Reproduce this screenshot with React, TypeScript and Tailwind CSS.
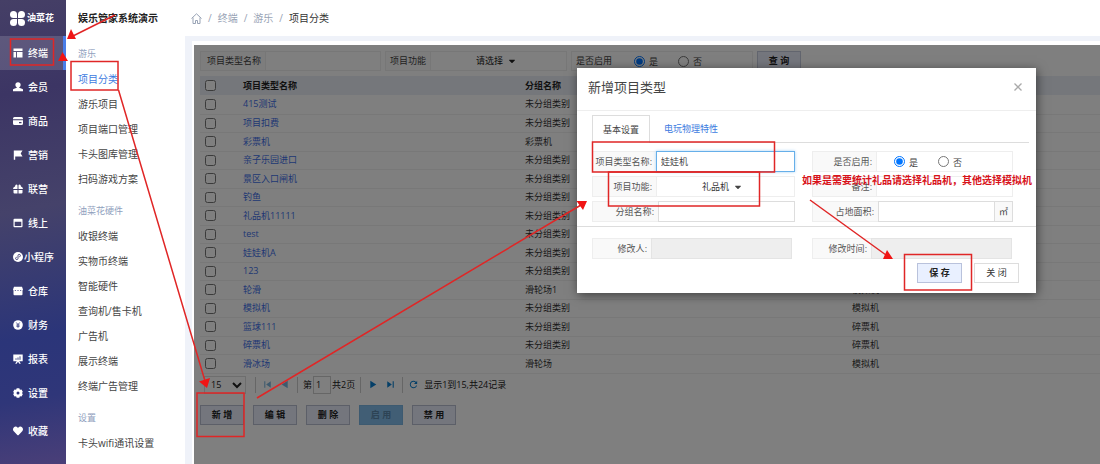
import type { ReactNode } from 'react';
import { clsx } from 'clsx';
import { FaCaretDown, FaHeart } from 'react-icons/fa';
import {
  MdSkipNext,
  MdSkipPrevious,
  MdPlayArrow,
  MdRefresh,
} from 'react-icons/md';

const Glyph = ({ children }: { children: ReactNode }) => (
  <svg viewBox="0 0 10 10" className="h-[10px] w-[10px]" fill="currentColor" aria-hidden="true">
    {children}
  </svg>
);

const LogoIcon = () => (
  <svg viewBox="0 0 15 15" className="h-[15px] w-[15px] shrink-0" fill="#fff" aria-hidden="true">
    <path d="M3.500 0A3.500 3.500 0 0 1 7 3.500V7H3.500a3.500 3.500 0 0 1 0-7z" />
    <path d="M11.500 0a3.500 3.500 0 0 1 0 7H8V3.500A3.500 3.500 0 0 1 11.500 0z" />
    <path d="M3.500 8H7v3.500A3.500 3.500 0 1 1 3.500 8z" />
    <path d="M8 8h3.500A3.500 3.500 0 1 1 8 11.500z" />
  </svg>
);

const navItems = [
  {
    label: '终端',
    active: true,
    icon: (
      <Glyph>
        <path d="M.5.5h9v2.500h-9zM.5 4h2.500v5.500H.5zM4 4h5.500v5.500H4z" />
      </Glyph>
    ),
  },
  {
    label: '会员',
    icon: (
      <Glyph>
        <circle cx="5" cy="2.800" r="2.600" />
        <path d="M3.800 4.500h2.400v1.300l3.300 1.200q.5.200.5.800V9.300H0V7.800q0-.6.500-.8l3.300-1.200z" />
      </Glyph>
    ),
  },
  {
    label: '商品',
    icon: (
      <Glyph>
        <path d="M1.500 1h7A1.500 1.500 0 0 1 10 2.500v.7H0v-.7A1.500 1.500 0 0 1 1.500 1zM0 4.300h10v3.200A1.500 1.500 0 0 1 8.500 9h-7A1.500 1.500 0 0 1 0 7.500zM6 6v1.200h2.500V6z" fillRule="evenodd" />
      </Glyph>
    ),
  },
  {
    label: '营销',
    icon: (
      <Glyph>
        <path d="M.8.5h8.700L7.700 3.500l1.800 3H2.200v3.200H.8z" />
      </Glyph>
    ),
  },
  {
    label: '联营',
    icon: (
      <Glyph>
        <path d="M4.500 1.500V5H0q0-2 2-2.500Q2.200.5 3.500.5q.8 0 1 1zM5.500 1.500V5H10q0-2-2-2.500Q7.800.5 6.500.5q-.8 0-1 1zM.5 6h4v3.500h-3a1 1 0 0 1-1-1zM5.500 6h4v2.500a1 1 0 0 1-1 1h-3z" />
      </Glyph>
    ),
  },
  {
    label: '线上',
    icon: (
      <Glyph>
        <path d="M1.500.8h7a1 1 0 0 1 1 1v6.400a1 1 0 0 1-1 1h-7a1 1 0 0 1-1-1V1.800a1 1 0 0 1 1-1zM1.700 3.800V8h6.600V3.800z" fillRule="evenodd" />
      </Glyph>
    ),
  },
  {
    label: '小程序',
    icon: (
      <Glyph>
        <circle cx="5" cy="5" r="5" />
        <path d="M3.700 5.200a1.200 1.200 0 1 0 1.300 1.300V3.500a1.200 1.200 0 1 1 1.300 1.300" fill="none" stroke="#3a3870" strokeWidth=".9" />
      </Glyph>
    ),
  },
  {
    label: '仓库',
    icon: (
      <Glyph>
        <path d="M1 .8h8l1 2.700-.5 1V8.300a1 1 0 0 1-1 1h-7a1 1 0 0 1-1-1V4.500L0 3.500z" />
        <path d="M2.300 4v1M5 4v1M7.700 4v1" stroke="#34387a" strokeWidth=".9" />
      </Glyph>
    ),
  },
  {
    label: '财务',
    icon: (
      <Glyph>
        <circle cx="5" cy="5" r="4.800" />
        <path d="M3.300 2.500 5 4.600l1.700-2.100M5 4.600V7.800M3.400 5h3.200M3.400 6.300h3.200" stroke="#2d3578" strokeWidth=".8" fill="none" />
      </Glyph>
    ),
  },
  {
    label: '报表',
    icon: (
      <Glyph>
        <path d="M.3.5h9.400v6.800H6.300L7.800 9.700H6.400L5 7.700 3.600 9.700H2.200l1.500-2.400H.3z" />
        <path d="M3 5.800V4.300M5 5.800V3.500M7 5.800V2.300" stroke="#2b3578" strokeWidth=".9" />
      </Glyph>
    ),
  },
  {
    label: '设置',
    icon: (
      <Glyph>
        <path d="M3.700.3h2.600l.6 1.400 1.600-.1 1.300 2.200L9 5l.8 1.200-1.300 2.200-1.600-.1-.6 1.400H3.700l-.6-1.400-1.600.1L.2 6.200 1 5 .2 3.800l1.300-2.200 1.600.1zM5 3.500a1.500 1.500 0 1 0 0 3 1.500 1.500 0 0 0 0-3z" fillRule="evenodd" />
      </Glyph>
    ),
  },
  { label: '收藏', icon: <FaHeart size={10} /> },
];

const menuGroups = [
  { title: '游乐', items: ['项目分类', '游乐项目', '项目端口管理', '卡头图库管理', '扫码游戏方案'] },
  {
    title: '油菜花硬件',
    items: ['收银终端', '实物币终端', '智能硬件', '查询机/售卡机', '广告机', '展示终端', '终端广告管理'],
  },
  { title: '设置', items: ['卡头wifi通讯设置'] },
];

const rows = [
  ['415测试', '未分组类别', '模拟机'],
  ['项目扣费', '未分组类别', '模拟机'],
  ['彩票机', '彩票机', '彩票机'],
  ['亲子乐园进口', '未分组类别', '闸机'],
  ['景区入口闸机', '未分组类别', '闸机'],
  ['钓鱼', '未分组类别', '模拟机'],
  ['礼品机11111', '未分组类别', '礼品机'],
  ['test', '未分组类别', '模拟机'],
  ['娃娃机A', '未分组类别', '礼品机'],
  ['123', '未分组类别', '模拟机'],
  ['轮滑', '滑轮场1', '模拟机'],
  ['模拟机', '未分组类别', '模拟机'],
  ['篮球111', '未分组类别', '碎票机'],
  ['碎票机', '未分组类别', '碎票机'],
  ['滑冰场', '滑轮场', '模拟机'],
];

const Sidebar = () => (
  <nav className="w-[66px] shrink-0 bg-[linear-gradient(170deg,#453f66_0%,#3c3564_20%,#45426a_45%,#2b3579_72%,#2f3679_85%,#4a3f78_100%)] text-white">
    <div className="flex h-9 items-center gap-0.5 pl-2.5 text-[9px] font-bold">
      <LogoIcon />
      油菜花
    </div>
    {navItems.map(({ label, icon, active }) => (
      <a
        key={label}
        href="#"
        className={clsx(
          'flex h-[34px] items-center pl-[13px] text-[10px] font-medium last:mt-1',
          active && 'border-r-[3px] border-[#4a7de8] bg-white/15'
        )}
      >
        <span className={clsx('shrink-0', label.length > 2 ? 'w-[11px]' : 'w-[15px]')}>{icon}</span>
        {label}
      </a>
    ))}
  </nav>
);

const SubMenu = () => (
  <aside className="w-[119px] shrink-0 bg-white pl-3">
    <h1 className="flex h-9 items-center text-[10px] font-bold text-[#222]">娱乐管家系统演示</h1>
    <div className="flex flex-col gap-2 pt-1.5">
      {menuGroups.map((group, i) => (
        <div key={group.title}>
          <h2 className="flex h-6 items-center text-[9px] text-[#8fa0bd]">{group.title}</h2>
          {group.items.map((item, j) => (
            <a
              key={item}
              href="#"
              className={clsx(
                'flex h-[25px] items-center text-[10px]',
                i === 0 && j === 0 ? 'text-[#3d7be0]' : 'text-[#444]'
              )}
            >
              {item}
            </a>
          ))}
        </div>
      ))}
    </div>
  </aside>
);

const Breadcrumb = () => (
  <header className="flex h-9 items-center gap-1.5 bg-white pl-1.5 text-[10px] text-[#98a3b5]">
    <svg viewBox="0 0 11 11" className="h-[11px] w-[11px]" fill="none" stroke="currentColor" aria-hidden="true">
      <path d="M.5 5.500 5.500.8l5 4.700M2 4.500v6h2.500v-3h2v3H9v-6" />
    </svg>
    <span>/</span>
    <a href="#">终端</a>
    <span>/</span>
    <a href="#">游乐</a>
    <span>/</span>
    <span className="text-[#333]">项目分类</span>
  </header>
);

const YesNo = ({ name }: { name: string }) => (
  <div className="flex items-center gap-5">
    <label className="flex items-center gap-1">
      <input type="radio" name={name} defaultChecked className="h-[11px] w-[11px]" />
      <span className="pt-0.5">是</span>
    </label>
    <label className="flex items-center gap-1">
      <input type="radio" name={name} className="h-[11px] w-[11px]" />
      <span className="pt-0.5">否</span>
    </label>
  </div>
);

const SearchForm = () => (
  <form className="flex h-5 gap-1 text-[#444]">
    <div className="flex w-[181px] border border-[#eee]">
      <label htmlFor="q-name" className="flex w-16 items-center bg-[#fafafa] pl-1.5">
        项目类型名称
      </label>
      <input id="q-name" className="min-w-0 flex-1 border-l border-[#eee] bg-white px-1" />
    </div>
    <div className="flex w-[182px] border border-[#eee]">
      <label htmlFor="q-func" className="flex w-11 items-center bg-[#fafafa] pl-1">
        项目功能
      </label>
      <div className="flex flex-1 items-center justify-center gap-px border-l border-[#eee] pr-1">
        <select id="q-func" className="w-[30px] appearance-none text-[#222]">
          <option>请选择</option>
        </select>
        <FaCaretDown className="text-[#222]" size={10} />
      </div>
    </div>
    <fieldset className="flex w-[182px] items-center border border-[#eee]">
      <span className="w-[62px] pl-1">是否启用</span>
      <YesNo name="q-enabled" />
    </fieldset>
    <button type="button" className="w-11 border border-[#c5cbdc] bg-[#e8ecfa] font-bold text-[#222]">
      查 询
    </button>
  </form>
);

const TypeTable = () => (
  <table className="mt-[5px] w-full table-fixed border-collapse text-left">
    <colgroup>
      <col className="w-[43px]" />
      <col className="w-[282px]" />
      <col className="w-[327px]" />
      <col />
    </colgroup>
    <thead>
      <tr className="h-[19px] bg-[#ebeef6] text-[#222]">
        <th className="pl-[5px]">
          <input type="checkbox" aria-label="全选" className="block h-[11px] w-[11px]" />
        </th>
        <th>项目类型名称</th>
        <th>分组名称</th>
        <th>项目功能</th>
      </tr>
    </thead>
    <tbody>
      {rows.map(([name, group, func]) => (
        <tr key={name} className="border-b border-[#f0f0f0] odd:h-[19px] even:h-[18px]">
          <td className="pl-[5px]">
            <input type="checkbox" aria-label={name} className="block h-[11px] w-[11px]" />
          </td>
          <td>
            <a href="#" className="text-[#3f6fe8]">
              {name}
            </a>
          </td>
          <td>{group}</td>
          <td>{func}</td>
        </tr>
      ))}
    </tbody>
  </table>
);

const Divider = () => <span className="h-4 w-px bg-[#ccc]" />;

const Pagination = () => (
  <div className="flex h-[22px] items-center gap-[5px] pl-1 text-[#222]">
    <select aria-label="每页条数" className="mr-1 h-[18px] w-[42px] border border-[#ddd] bg-white pl-0.5">
      <option>15</option>
    </select>
    <Divider />
    <button type="button" aria-label="首页" className="text-[#7db4dc]">
      <MdSkipPrevious size={13} />
    </button>
    <button type="button" aria-label="上一页" className="text-[#7db4dc]">
      <MdPlayArrow size={13} className="rotate-180" />
    </button>
    <Divider />
    <label className="flex items-center gap-px">
      第
      <input defaultValue="1" className="h-[18px] w-[18px] border border-[#ccc] bg-white pl-0.5" />
      共2页
    </label>
    <Divider />
    <button type="button" aria-label="下一页" className="text-[#0a7fd0]">
      <MdPlayArrow size={13} />
    </button>
    <button type="button" aria-label="末页" className="text-[#0a7fd0]">
      <MdSkipNext size={13} />
    </button>
    <Divider />
    <button type="button" aria-label="刷新" className="text-[#0a7fd0]">
      <MdRefresh size={11} />
    </button>
    <span>显示1到15,共24记录</span>
  </div>
);

const actions = ['新 增', '编 辑', '删 除', '启 用', '禁 用'];

const Actions = () => (
  <div className="mt-[9px] flex gap-[9px]">
    {actions.map((text) => (
      <button
        key={text}
        type="button"
        disabled={text === '启 用'}
        className="h-5 w-11 border border-[#b9bed0] bg-[#e8ecfa] font-bold text-[#222] disabled:border-[#7ab4e0] disabled:bg-[#82bdea] disabled:text-[#5a86aa]"
      >
        {text}
      </button>
    ))}
  </div>
);

type FieldProps = {
  label: string;
  htmlFor?: string;
  labelWidth?: string;
  children: ReactNode;
};

const Field = ({ label, htmlFor, labelWidth = 'w-16', children }: FieldProps) => (
  <div className="flex h-[21px]">
    <label
      htmlFor={htmlFor}
      className={clsx(
        'flex shrink-0 items-center justify-end border border-r-0 border-[#eee] bg-[#f9f9f9] pr-1 text-[#555]',
        labelWidth
      )}
    >
      {label}:
    </label>
    {children}
  </div>
);

const Dialog = () => (
  <section
    role="dialog"
    aria-label="新增项目类型"
    className="w-[459px] bg-white pb-2.5 text-[#444] shadow-[1px_2px_10px_rgba(0,0,0,0.5)]"
  >
    <div className="flex h-[43px] items-center justify-between border-b border-[#eee] pr-3.5 pb-1 pl-[11px]">
      <h2 className="text-[13px] text-[#444]">新增项目类型</h2>
      <button type="button" aria-label="关闭窗口" className="text-[#aaa]">
        <svg viewBox="0 0 8 8" className="h-2 w-2" stroke="currentColor" strokeWidth="1.300" aria-hidden="true">
          <path d="M.5.5l7 7M7.500.5l-7 7" />
        </svg>
      </button>
    </div>
    <div className="mr-[7px] ml-[15px] mt-1 flex h-7 items-stretch border-b border-[#ddd]" role="tablist">
      <button type="button" role="tab" aria-selected="true" className="-mb-px w-[58px] border border-b-0 border-[#ddd] bg-white">
        基本设置
      </button>
      <button type="button" role="tab" aria-selected="false" className="px-3.5 text-[#3d7be0]">
        电玩物理特性
      </button>
    </div>

    {/* Editable fields */}
    <div className="mt-2 grid grid-cols-[203px_201px] gap-x-[17px] gap-y-1 border-b border-[#ddd] pb-1 pl-[15px]">
      <Field label="项目类型名称" htmlFor="name">
        <input id="name" defaultValue="娃娃机" className="min-w-0 flex-1 border border-[#66afe9] pl-1 shadow-[0_0_3px_#a8d2f5]" />
      </Field>
      <Field label="是否启用">
        <div className="flex flex-1 items-center border border-[#eee] pl-[17px]">
          <YesNo name="enabled" />
        </div>
      </Field>
      <Field label="项目功能" htmlFor="func">
        <div className="flex flex-1 items-center justify-center gap-px border border-[#eee] pr-1.5">
          <select id="func" className="w-[30px] appearance-none text-[#333]">
            <option>礼品机</option>
          </select>
          <FaCaretDown size={10} />
        </div>
      </Field>
      <Field label="备注" htmlFor="remark">
        <input id="remark" className="min-w-0 flex-1 border border-[#eee] pl-1" />
      </Field>
      <Field label="分组名称" htmlFor="group" labelWidth="w-[66px]">
        <input id="group" className="min-w-0 flex-1 border border-[#ddd] pl-1" />
      </Field>
      <Field label="占地面积" htmlFor="area" labelWidth="w-[66px]">
        <input id="area" className="min-w-0 flex-1 border border-[#ddd] pl-1" />
        <span className="flex w-[18px] items-center justify-center border border-l-0 border-[#ddd] bg-[#f9f9f9]">
          ㎡
        </span>
      </Field>
    </div>

    {/* Read-only audit fields */}
    <div className="mt-[11px] grid grid-cols-[200px_200px] gap-x-5 pl-[15px]">
      <Field label="修改人" htmlFor="editor" labelWidth="w-[59px]">
        <input id="editor" disabled className="min-w-0 flex-1 border border-[#e4e4e4] bg-[#eee]" />
      </Field>
      <Field label="修改时间" htmlFor="edited-at" labelWidth="w-[59px]">
        <input id="edited-at" disabled className="min-w-0 flex-1 border border-[#e4e4e4] bg-[#eee]" />
      </Field>
    </div>

    <div className="mt-1 flex justify-end gap-3 pr-[17px]">
      <button type="button" className="h-5 w-[45px] border border-[#b9c2dc] bg-[#e9f0ff] font-bold text-[#222]">
        保 存
      </button>
      <button type="button" className="h-5 w-[45px] border border-[#ddd] bg-white text-[#333]">
        关 闭
      </button>
    </div>
  </section>
);

// Tutorial marks drawn over the page
const Marks = () => (
  <div className="pointer-events-none absolute top-0 left-0">
    <svg width="1100" height="464" viewBox="0 0 1100 464" className="max-w-none" aria-hidden="true">
      <g fill="none" stroke="#e02626" strokeWidth="1.500">
        <rect x="10.500" y="39" width="43" height="26" />
        <rect x="71" y="61.500" width="47" height="28.500" />
        <rect x="197" y="393" width="47" height="43.500" />
        <rect x="592.500" y="142" width="182" height="30" />
        <rect x="608.500" y="172" width="151" height="34" />
        <rect x="904.500" y="254.500" width="67" height="35.500" />
        <path d="M115 15 73 36M118.500 90 205 381M257 398 581 205M810 200 886 255" />
      </g>
      <path
        d="M67 39 71 29 76 39zM62.500 52 58 61H68zM207 388 199 381.500 210 378zM587 201H576.500L583 210zM893 259 887 250 883 259z"
        fill="#f01414"
      />
    </svg>
    <p className="absolute top-[174px] left-[802px] text-[10px] leading-3 font-bold whitespace-nowrap text-[#d8121a]">
      如果是需要统计礼品请选择礼品机，其他选择模拟机
    </p>
  </div>
);

const App = () => (
  <div
    lang="zh-CN"
    className="relative flex min-h-screen overflow-hidden bg-white font-['Open_Sans','Noto_Sans_CJK_SC',sans-serif] text-[9px] leading-3"
  >
    <Sidebar />
    <SubMenu />
    <div className="flex min-w-0 flex-1 flex-col">
      <Breadcrumb />
      <div className="flex flex-1 flex-col bg-[#eff2f9] pt-[5px] pl-[7px]">
        <main className="flex flex-1 flex-col bg-white pt-1 pl-0.5">
          <div className="relative flex-1 pt-1.5 pl-1.5 text-[#333]">
            <SearchForm />
            <TypeTable />
            <Pagination />
            <Actions />
            {/* Backdrop with the open dialog */}
            <div className="absolute inset-0 flex items-start justify-end bg-black/50 pt-[23px] pr-16">
              <Dialog />
            </div>
          </div>
        </main>
      </div>
    </div>
    <Marks />
  </div>
);

export default App;
